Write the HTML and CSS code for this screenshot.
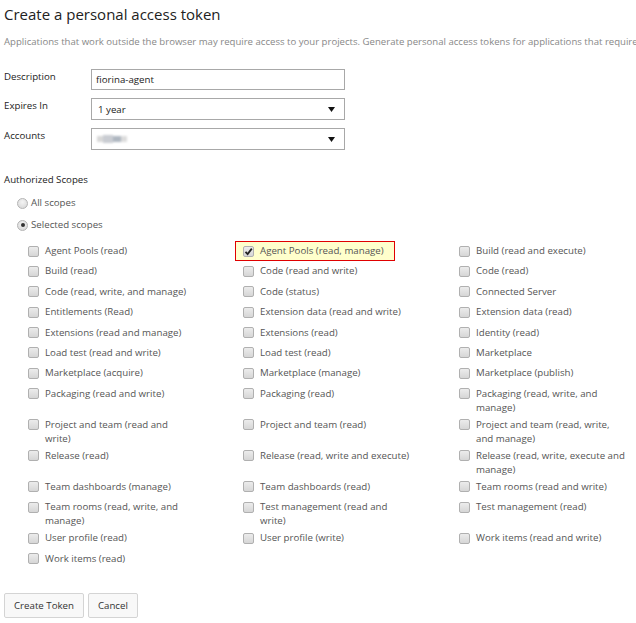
FILE: index.html
```html
<!DOCTYPE html>
<html>
<head>
<meta charset="utf-8">
<link rel="stylesheet" href="styles.css">
</head>
<body>
<div class="page">
  <h1 class="title">Create a personal access token</h1>
  <p class="intro">Applications that work outside the browser may require access to your projects. Generate personal access tokens for applications that require access to your account.</p>

  <div class="form">
    <div class="form-row">
      <label class="form-label">Description</label>
      <div class="field field-input">fiorina-agent</div>
    </div>
    <div class="form-row">
      <label class="form-label">Expires In</label>
      <div class="field field-select"><span class="sel-text">1 year</span><svg class="arrow" width="7" height="5" viewBox="0 0 7 5"><path d="M0 0H7L3.5 5Z" fill="#111"/></svg></div>
    </div>
    <div class="form-row">
      <label class="form-label">Accounts</label>
      <div class="field field-select"><span class="blur"><i class="b1"></i><i class="b2"></i><i class="b3"></i><i class="b4"></i></span><svg class="arrow" width="7" height="5" viewBox="0 0 7 5"><path d="M0 0H7L3.5 5Z" fill="#111"/></svg></div>
    </div>
  </div>

  <div class="scopes-title">Authorized Scopes</div>
  <div class="radios">
    <div class="radio-row"><span class="radio"></span><span>All scopes</span></div>
    <div class="radio-row"><span class="radio radio-on"></span><span>Selected scopes</span></div>
  </div>

  <div class="grid">
    <div class="item"><span class="cb"></span><span class="lbl">Agent Pools (read)</span></div>
    <div class="item item-hl"><span class="cb cb-on"><svg width="9" height="9" viewBox="0 0 9 9"><path d="M1.5 4.8L3.6 7L7.8 1.6" fill="none" stroke="#222" stroke-width="1.8"/></svg></span><span class="lbl">Agent Pools (read, manage)</span></div>
    <div class="item"><span class="cb"></span><span class="lbl">Build (read and execute)</span></div>

    <div class="item"><span class="cb"></span><span class="lbl">Build (read)</span></div>
    <div class="item"><span class="cb"></span><span class="lbl">Code (read and write)</span></div>
    <div class="item"><span class="cb"></span><span class="lbl">Code (read)</span></div>

    <div class="item"><span class="cb"></span><span class="lbl">Code (read, write, and manage)</span></div>
    <div class="item"><span class="cb"></span><span class="lbl">Code (status)</span></div>
    <div class="item"><span class="cb"></span><span class="lbl">Connected Server</span></div>

    <div class="item"><span class="cb"></span><span class="lbl">Entitlements (Read)</span></div>
    <div class="item"><span class="cb"></span><span class="lbl">Extension data (read and write)</span></div>
    <div class="item"><span class="cb"></span><span class="lbl">Extension data (read)</span></div>

    <div class="item"><span class="cb"></span><span class="lbl">Extensions (read and manage)</span></div>
    <div class="item"><span class="cb"></span><span class="lbl">Extensions (read)</span></div>
    <div class="item"><span class="cb"></span><span class="lbl">Identity (read)</span></div>

    <div class="item"><span class="cb"></span><span class="lbl">Load test (read and write)</span></div>
    <div class="item"><span class="cb"></span><span class="lbl">Load test (read)</span></div>
    <div class="item"><span class="cb"></span><span class="lbl">Marketplace</span></div>

    <div class="item"><span class="cb"></span><span class="lbl">Marketplace (acquire)</span></div>
    <div class="item"><span class="cb"></span><span class="lbl">Marketplace (manage)</span></div>
    <div class="item"><span class="cb"></span><span class="lbl">Marketplace (publish)</span></div>

    <div class="item"><span class="cb"></span><span class="lbl">Packaging (read and write)</span></div>
    <div class="item"><span class="cb"></span><span class="lbl">Packaging (read)</span></div>
    <div class="item"><span class="cb"></span><span class="lbl">Packaging (read, write, and manage)</span></div>

    <div class="item"><span class="cb"></span><span class="lbl">Project and team (read and write)</span></div>
    <div class="item"><span class="cb"></span><span class="lbl">Project and team (read)</span></div>
    <div class="item"><span class="cb"></span><span class="lbl">Project and team (read, write, and manage)</span></div>

    <div class="item"><span class="cb"></span><span class="lbl">Release (read)</span></div>
    <div class="item"><span class="cb"></span><span class="lbl lbl-wide">Release (read, write and execute)</span></div>
    <div class="item"><span class="cb"></span><span class="lbl lbl-mid">Release (read, write, execute and manage)</span></div>

    <div class="item"><span class="cb"></span><span class="lbl">Team dashboards (manage)</span></div>
    <div class="item"><span class="cb"></span><span class="lbl">Team dashboards (read)</span></div>
    <div class="item"><span class="cb"></span><span class="lbl">Team rooms (read and write)</span></div>

    <div class="item"><span class="cb"></span><span class="lbl">Team rooms (read, write, and manage)</span></div>
    <div class="item"><span class="cb"></span><span class="lbl">Test management (read and write)</span></div>
    <div class="item"><span class="cb"></span><span class="lbl">Test management (read)</span></div>

    <div class="item"><span class="cb"></span><span class="lbl">User profile (read)</span></div>
    <div class="item"><span class="cb"></span><span class="lbl">User profile (write)</span></div>
    <div class="item"><span class="cb"></span><span class="lbl">Work items (read and write)</span></div>

    <div class="item"><span class="cb"></span><span class="lbl">Work items (read)</span></div>
  </div>

  <div class="actions">
    <button class="btn">Create Token</button>
    <button class="btn">Cancel</button>
  </div>
</div>
</body>
</html>
```

FILE: styles.css
```css
html, body {
  margin: 0;
  padding: 0;
  background: #fff;
}
body {
  font-family: "Open Sans", "Noto Sans", sans-serif;
  font-size: 9.7px;
  color: #333;
  overflow: hidden;
}
.page {
  padding: 0 0 0 4px;
  width: 632px;
  overflow: hidden;
}
.title {
  margin: 3px 0 0;
  font-size: 15px;
  font-weight: 400;
  line-height: 22px;
  color: #222;
}
.intro {
  margin: 10px 0 0;
  line-height: 14px;
  color: #888;
  white-space: nowrap;
  font-size: 9.6px;
}
.form {
  margin-top: 20px;
  display: flex;
  flex-direction: column;
  gap: 8px;
}
.form-row {
  display: flex;
  align-items: flex-start;
}
.form-label {
  width: 87px;
  padding-top: 1px;
  line-height: 14px;
  color: #222;
}
.field {
  box-sizing: border-box;
  width: 254px;
  border: 1px solid #a8a8a8;
  background: #fff;
  display: flex;
  align-items: center;
  color: #222;
}
.field-input {
  height: 21px;
  padding: 0 4px;
}
.field-select {
  height: 22px;
  padding: 0 9px 0 6px;
  justify-content: space-between;
}
.blur {
  display: flex;
  filter: blur(1.2px);
  margin-left: -1px;
}
.blur i {
  display: block;
  height: 6px;
}
.blur .b1 { width: 6px; background: #d8d8d8; }
.blur .b2 { width: 10px; background: #c9ccd2; margin-top: -1px; height: 8px; }
.blur .b3 { width: 8px; background: #aeb6c0; }
.blur .b4 { width: 6px; background: #dcdcdc; }
.arrow {
  display: block;
}
.scopes-title {
  margin-top: 23px;
  line-height: 14px;
  color: #222;
}
.radios {
  margin-top: 9px;
  padding-left: 13px;
  display: flex;
  flex-direction: column;
  gap: 8px;
}
.radio-row {
  display: flex;
  align-items: center;
  gap: 3px;
  line-height: 14px;
  color: #555;
}
.radio {
  box-sizing: border-box;
  width: 11px;
  height: 11px;
  border-radius: 50%;
  border: 1px solid #b4b4b4;
  background: radial-gradient(circle at 50% 35%, #f4f4f4, #d4d4d4);
  display: flex;
  align-items: center;
  justify-content: center;
}
.radio-on::after {
  content: "";
  width: 4px;
  height: 4px;
  border-radius: 50%;
  background: #333;
}
.grid {
  margin-top: 9px;
  margin-left: 24px;
  display: grid;
  grid-template-columns: 215px 216px 170px;
}
.item {
  display: flex;
  align-items: flex-start;
  gap: 6px;
  min-height: 20.4px;
  width: fit-content;
}
.cb {
  box-sizing: border-box;
  flex: none;
  width: 11px;
  height: 11px;
  margin-top: 4.5px;
  border: 1px solid #b0b0b0;
  border-radius: 2px;
  background: linear-gradient(#ececec, #d6d6d6);
  display: flex;
  align-items: center;
  justify-content: center;
}
.cb svg {
  display: block;
}
.lbl {
  padding-top: 3px;
  line-height: 14px;
  color: #555;
  max-width: 148px;
}
.lbl-mid {
  max-width: 156px;
}
.lbl-wide {
  max-width: 170px;
}
.item-hl {
  margin-left: -8px;
  padding: 0 11px 0 8px;
  background: #ffffcc;
  outline: 1px solid #e00000;
  outline-offset: -1px;
  height: 20.4px;
  box-sizing: border-box;
  width: auto;
  justify-self: start;
}
.actions {
  margin-top: 24px;
  display: flex;
  gap: 4px;
}
.btn {
  font-family: inherit;
  font-size: 9.7px;
  color: #333;
  background: #f8f8f8;
  border: 1px solid #d4d4d4;
  border-radius: 2px;
  height: 25px;
  padding: 0 9px;
  margin: 0;
}
```
